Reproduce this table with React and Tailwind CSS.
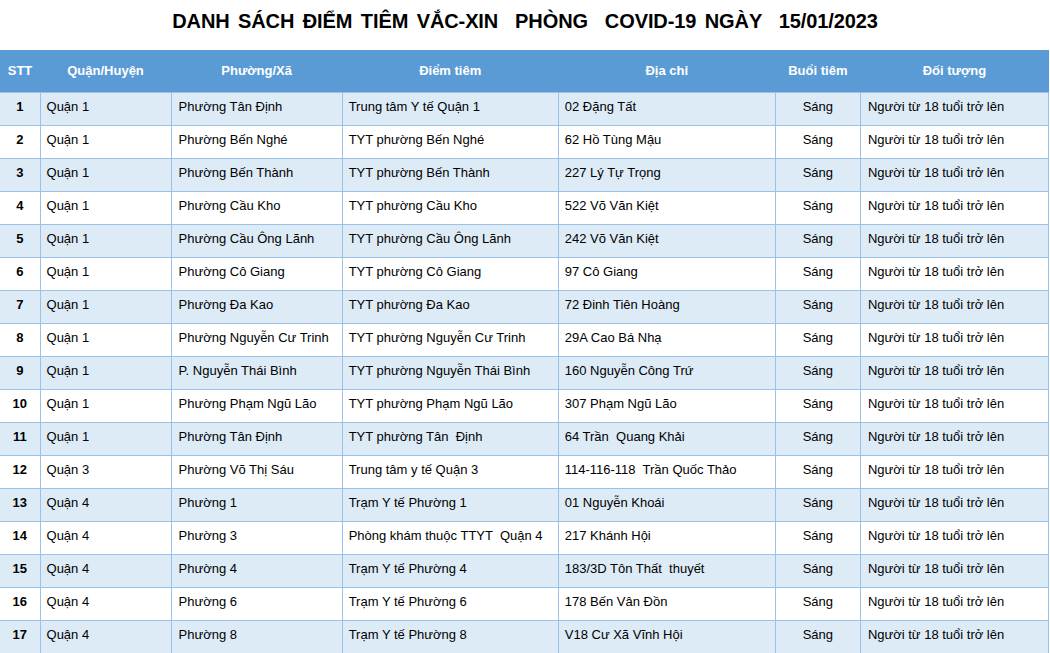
const rows = [
  ['1', 'Quận 1', 'Phường Tân Định', 'Trung tâm Y tế Quận 1', '02 Đặng Tất'],
  ['2', 'Quận 1', 'Phường Bến Nghé', 'TYT phường Bến Nghé', '62 Hồ Tùng Mậu'],
  ['3', 'Quận 1', 'Phường Bến Thành', 'TYT phường Bến Thành', '227 Lý Tự Trọng'],
  ['4', 'Quận 1', 'Phường Cầu Kho', 'TYT phường Cầu Kho', '522 Võ Văn Kiệt'],
  ['5', 'Quận 1', 'Phường Cầu Ông Lãnh', 'TYT phường Cầu Ông Lãnh', '242 Võ Văn Kiệt'],
  ['6', 'Quận 1', 'Phường Cô Giang', 'TYT phường Cô Giang', '97 Cô Giang'],
  ['7', 'Quận 1', 'Phường Đa Kao', 'TYT phường Đa Kao', '72 Đinh Tiên Hoàng'],
  ['8', 'Quận 1', 'Phường Nguyễn Cư Trinh', 'TYT phường Nguyễn Cư Trinh', '29A Cao Bá Nhạ'],
  ['9', 'Quận 1', 'P. Nguyễn Thái Bình', 'TYT phường Nguyễn Thái Bình', '160 Nguyễn Công Trứ'],
  ['10', 'Quận 1', 'Phường Phạm Ngũ Lão', 'TYT phường Phạm Ngũ Lão', '307 Phạm Ngũ Lão'],
  ['11', 'Quận 1', 'Phường Tân Định', 'TYT phường Tân  Định', '64 Trần  Quang Khải'],
  ['12', 'Quận 3', 'Phường Võ Thị Sáu', 'Trung tâm y tế Quận 3', '114-116-118  Trần Quốc Thảo'],
  ['13', 'Quận 4', 'Phường 1', 'Trạm Y tế Phường 1', '01 Nguyễn Khoái'],
  ['14', 'Quận 4', 'Phường 3', 'Phòng khám thuộc TTYT  Quận 4', '217 Khánh Hội'],
  ['15', 'Quận 4', 'Phường 4', 'Trạm Y tế Phường 4', '183/3D Tôn Thất  thuyết'],
  ['16', 'Quận 4', 'Phường 6', 'Trạm Y tế Phường 6', '178 Bến Vân Đồn'],
  ['17', 'Quận 4', 'Phường 8', 'Trạm Y tế Phường 8', 'V18 Cư Xã Vĩnh Hội'],
];

const headers = ['STT', 'Quận/Huyện', 'Phường/Xã', 'Điểm tiêm', 'Địa chỉ', 'Buổi tiêm', 'Đối tượng'];
const widths = ['w-[40px]', 'w-[131px]', 'w-[171px]', 'w-[216px]', 'w-[217px]', 'w-[85px]', 'w-[188px]'];

export default function App() {
  return (
    <div className="w-[1050px] h-[653px] overflow-hidden bg-white font-['Liberation_Sans',Arial,sans-serif] text-black">
      <h1 className="h-[50px] pt-[9px] text-center text-[20px] font-bold tracking-[-0.1px] [word-spacing:3px] leading-[24px] whitespace-pre">
        DANH SÁCH ĐIỂM TIÊM VẮC-XIN  PHÒNG  COVID-19 NGÀY  15/01/2023
      </h1>
      <table className="table-fixed border-collapse w-[1049px] text-[13px]">
        <colgroup>
          {widths.map((w, i) => (
            <col key={i} className={w} />
          ))}
        </colgroup>
        <thead>
          <tr className="h-[42px] bg-[#5b9bd5] text-white">
            {headers.map((h) => (
              <th key={h} className="font-bold text-center align-middle pb-[1px]">
                {h}
              </th>
            ))}
          </tr>
        </thead>
        <tbody>
          {rows.map((r, i) => (
            <tr key={r[0]} className={i % 2 === 0 ? 'h-[33px] bg-[#ddebf7]' : 'h-[33px] bg-white'}>
              <td className="border-t border-r border-[#9bc2e6] text-center font-bold pb-[4px]">{r[0]}</td>
              <td className="border border-[#9bc2e6] pl-[6px] pb-[4px] whitespace-pre">{r[1]}</td>
              <td className="border border-[#9bc2e6] pl-[7px] pb-[4px] whitespace-pre">{r[2]}</td>
              <td className="border border-[#9bc2e6] pl-[6px] pb-[4px] whitespace-pre">{r[3]}</td>
              <td className="border border-[#9bc2e6] pl-[6px] pb-[4px] whitespace-pre">{r[4]}</td>
              <td className="border border-[#9bc2e6] text-center pb-[4px]">Sáng</td>
              <td className="border border-[#9bc2e6] pl-[7px] pb-[4px] whitespace-pre">Người từ 18 tuổi trở lên</td>
            </tr>
          ))}
        </tbody>
      </table>
    </div>
  );
}
